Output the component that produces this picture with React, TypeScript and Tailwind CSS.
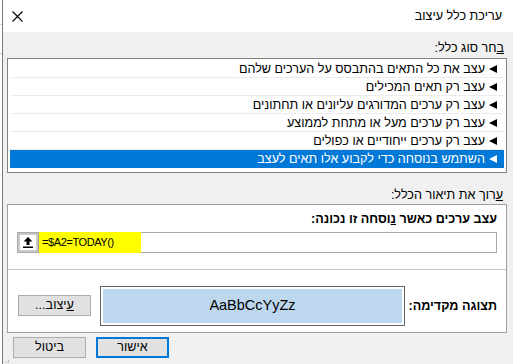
import React from "react";

const RULE_TYPES = [
  "עצב את כל התאים בהתבסס על הערכים שלהם",
  "עצב רק תאים המכילים",
  "עצב רק ערכים המדורגים עליונים או תחתונים",
  "עצב רק ערכים מעל או מתחת לממוצע",
  "עצב רק ערכים ייחודיים או כפולים",
  "השתמש בנוסחה כדי לקבוע אלו תאים לעצב",
];

const SELECTED_INDEX = 5;

const Pointer: React.FC<{ light?: boolean }> = ({ light }) => (
  <svg width="8" height="8" viewBox="0 0 8 8" className="shrink-0">
    <path d="M0 4 L8 0 L8 8 Z" fill={light ? "#ffffff" : "#000000"} />
  </svg>
);

const App: React.FC = () => {
  return (
    <div
      className="relative flex h-[364px] w-[513px] overflow-hidden bg-white text-[12.6px] text-black"
      style={{ fontFamily: '"Liberation Sans", "DejaVu Sans", sans-serif' }}
    >
      {/* sheet peeking out on the left */}
      <div className="flex w-[2px] flex-col bg-white">
        <div className="mt-[24px] h-px bg-[#d4d4d4]" />
        <div className="mt-[28px] h-px bg-[#d4d4d4]" />
      </div>

      <div className="flex flex-1 flex-col border-l border-[#7a7a7a]">
        {/* title bar */}
        <div className="flex h-[32px] shrink-0 items-center justify-between bg-white pl-[9px] pr-[11px]">
          <svg width="11" height="11" viewBox="0 0 11 11">
            <path d="M0.5 0.5 L10.5 10.5 M10.5 0.5 L0.5 10.5" stroke="#000" strokeWidth="1.1" />
          </svg>
          <span dir="rtl">עריכת כלל עיצוב</span>
        </div>

        {/* body */}
        <div className="flex flex-1 flex-col bg-[#f0f0f0] pl-[4px] pr-[6px]">
          <div dir="rtl" className="mt-[8px] h-[16px] pr-[3px] leading-[16px]">
            <u>ב</u>חר סוג כלל:
          </div>

          <div className="mt-[2px] h-[115px] border border-[#828282] bg-white px-[2px] pt-[1px]">
            {RULE_TYPES.map((label, i) => {
              const selected = i === SELECTED_INDEX;
              return (
                <div
                  key={label}
                  dir="rtl"
                  className={
                    selected
                      ? "flex h-[18px] items-center gap-[4px] bg-[#0078d7] pr-[7px] text-white"
                      : "flex h-[18px] items-center gap-[4px] border-b border-[#ececec] pr-[7px]"
                  }
                >
                  <Pointer light={selected} />
                  <span className="leading-[16px]">{label}</span>
                </div>
              );
            })}
          </div>

          <div dir="rtl" className="mt-[14px] h-[16px] pr-[4px] leading-[16px]">
            <u>ע</u>רוך את תיאור הכלל:
          </div>

          <div className="mt-px flex h-[129px] flex-col border border-[#a0a0a0] bg-white">
            <div className="px-[9px] pt-[6px]">
              <div dir="rtl" className="h-[16px] font-bold leading-[16px]">
                עצב ערכים כאשר <u>נ</u>וסחה זו נכונה:
              </div>
              <div className="mt-[5px] flex h-[21px] items-stretch border border-[#a8a8a8] bg-white">
                <div className="flex w-[21px] items-center justify-center border-r border-[#a0a0a0] bg-[#c8c8c8] p-[2px]">
                  <div className="flex h-full w-full items-center justify-center bg-white">
                    <svg width="10" height="11" viewBox="0 0 10 11">
                      <path d="M5 0 L9.5 4.5 L6.5 4.5 L6.5 8 L3.5 8 L3.5 4.5 L0.5 4.5 Z" fill="#000" />
                      <rect x="0" y="9.5" width="10" height="1.5" fill="#000" />
                    </svg>
                  </div>
                </div>
                <div className="-my-px flex w-[102px] items-center bg-[#ffff00] pl-[3px] text-[11px] tracking-[-0.4px]">
                  =$A2=TODAY()
                </div>
              </div>
            </div>

            <div className="mt-[16px] h-px bg-[#c8c8c8]" />

            <div className="flex flex-1 items-start pl-[10px] pt-[16px]">
              <div className="mt-[9px] flex h-[21px] w-[73px] items-center justify-center border border-[#adadad] bg-[#e1e1e1]">
                <span dir="rtl">
                  <u>ע</u>יצוב...
                </span>
              </div>
              <div className="ml-[9px] flex h-[40px] w-[305px] border border-[#646464] p-[2px]">
                <div className="flex flex-1 items-center justify-center bg-[#bdd7ee] text-[14.5px]">
                  AaBbCcYyZz
                </div>
              </div>
              <div dir="rtl" className="mt-[12px] flex-1 pr-[9px] font-bold leading-[16px]">
                תצוגה מקדימה:
              </div>
            </div>
          </div>

          <div className="mt-[4px] flex gap-[10px] pl-[6px]">
            <div className="flex h-[21px] w-[73px] items-center justify-center border border-[#adadad] bg-[#e1e1e1]">
              ביטול
            </div>
            <div className="flex h-[21px] w-[73px] items-center justify-center border-2 border-[#0078d7] bg-[#e1e1e1]">
              אישור
            </div>
          </div>
        </div>
      </div>

      {/* size grip */}
      <div className="absolute bottom-0 left-[3px] grid grid-cols-3 gap-px p-px">
        <span className="h-px w-px" />
        <span className="h-px w-px" />
        <span className="h-px w-px bg-[#a0a0a0]" />
        <span className="h-px w-px" />
        <span className="h-px w-px bg-[#a0a0a0]" />
        <span className="h-px w-px bg-[#a0a0a0]" />
      </div>
    </div>
  );
};

export default App;
